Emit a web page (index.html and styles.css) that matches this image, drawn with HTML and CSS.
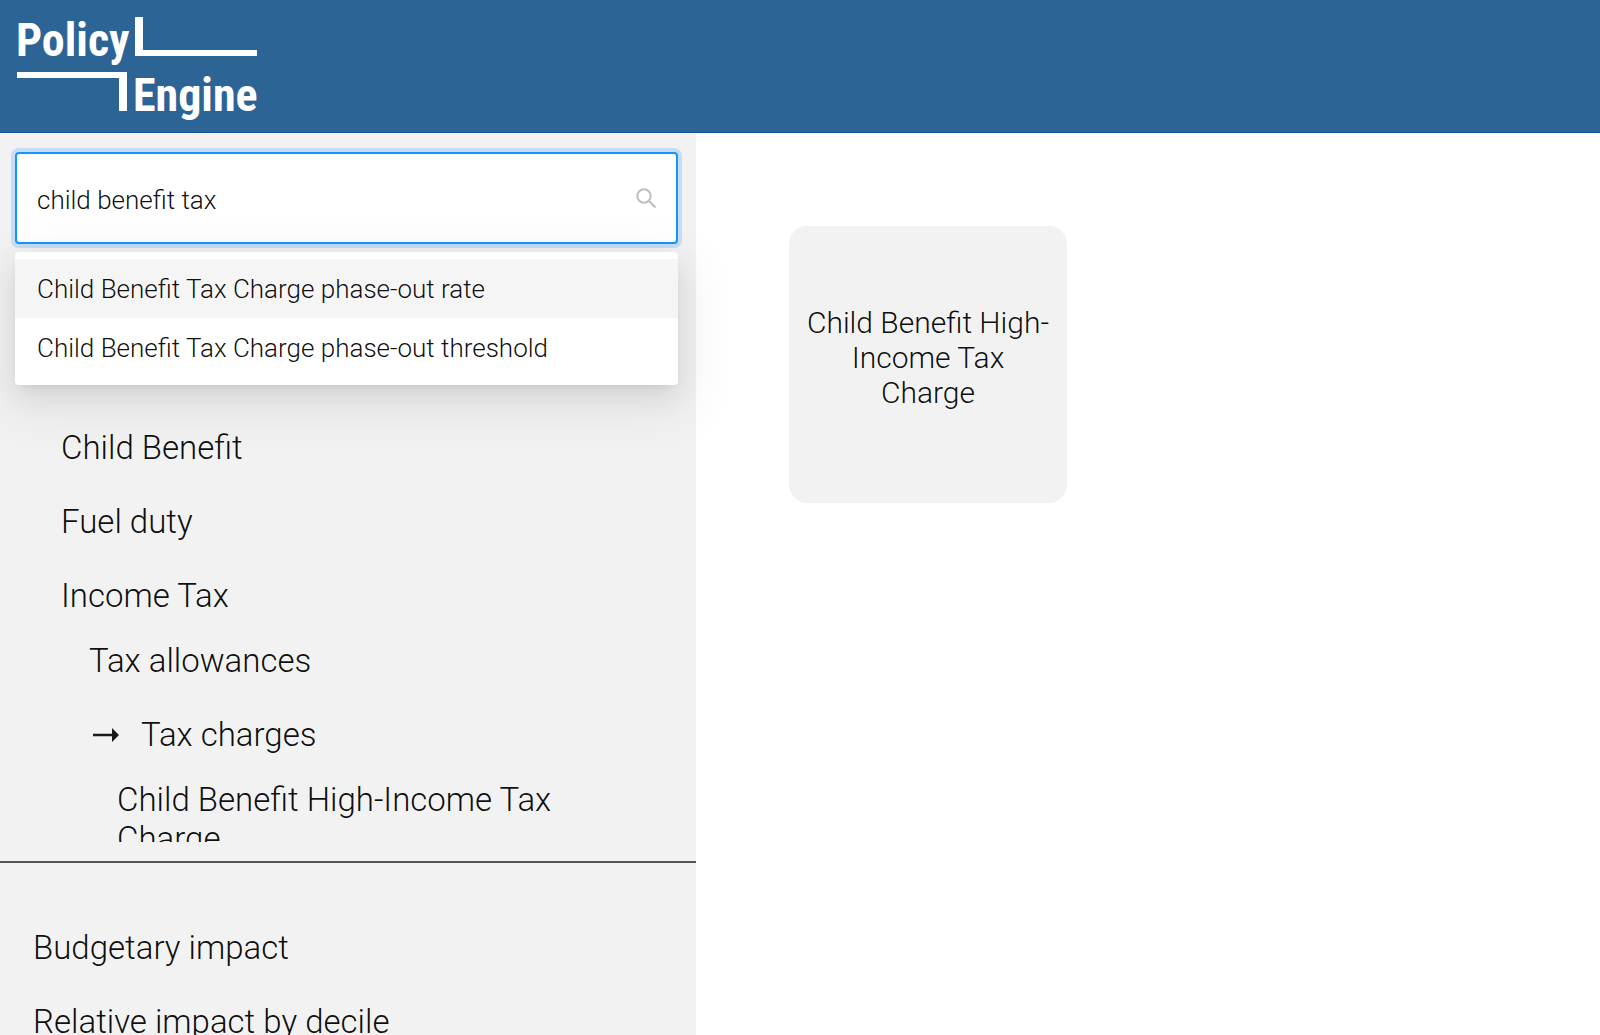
FILE: index.html
```html
<!DOCTYPE html>
<html lang="en">
<head>
<meta charset="utf-8">
<title>PolicyEngine</title>
<link rel="stylesheet" href="styles.css">
</head>
<body>
<header class="header">
  <a class="logo" href="#" aria-label="PolicyEngine">
    <svg width="240" height="112" viewBox="0 0 240 112" fill="#fff">
      <text class="logo-text" x="-1" y="44">Policy</text>
      <path d="M118 5h8v33h114v6H118zM0 60h110v39h-8V66H0z"/>
      <text class="logo-text" x="116" y="99">Engine</text>
    </svg>
  </a>
</header>
<div class="layout">
  <aside class="sidebar">
    <div class="search">
      <input class="search-input" type="text" aria-label="Search parameters" value="child benefit tax">
      <svg class="search-icon" width="22" height="22" viewBox="0 0 22 22" fill="none" stroke="#bfbfbf" stroke-width="2"><circle cx="9" cy="9" r="6.7"/><path d="M13.7 13.7l6.8 6.8"/></svg>
      <ul class="options">
        <li><button class="option option-active" type="button">Child Benefit Tax Charge phase-out rate</button></li>
        <li><button class="option" type="button">Child Benefit Tax Charge phase-out threshold</button></li>
      </ul>
    </div>
    <nav class="menu policy-menu">
      <ul class="menu-list">
        <li><a href="#">Business rates</a></li>
        <li><a href="#">Child Benefit</a></li>
        <li><a href="#">Fuel duty</a></li>
        <li><a href="#">Income Tax</a>
          <ul class="menu-list submenu">
            <li><a href="#">Tax allowances</a></li>
            <li><a class="current" href="#"><svg width="30" height="16" viewBox="0 0 30 16" fill="#1a1a1a"><path d="M4 6.8h19V1l7 7-7 7V9.2H4z"/></svg>Tax charges</a>
              <ul class="menu-list submenu">
                <li><a href="#">Child Benefit High-Income Tax Charge</a></li>
              </ul>
            </li>
          </ul>
        </li>
      </ul>
    </nav>
    <nav class="menu impact-menu">
      <ul class="menu-list">
        <li><a href="#">Budgetary impact</a></li>
        <li><a href="#">Relative impact by decile</a></li>
      </ul>
    </nav>
  </aside>
  <main class="main">
    <button class="card" type="button">Child Benefit High-Income Tax Charge</button>
  </main>
</div>
</body>
</html>
```
FILE: styles.css
```css
* {
  box-sizing: border-box;
}

body {
  margin: 0;
  height: 100vh;
  display: flex;
  flex-direction: column;
  overflow: hidden;
  background: #fff;
  color: rgba(0, 0, 0, 0.95);
  font-family: Roboto, "Liberation Sans", sans-serif;
  font-weight: 300;
}

ul {
  list-style: none;
  margin: 0;
  padding: 0;
}

a {
  color: inherit;
  text-decoration: none;
}

button,
input {
  font: inherit;
  color: inherit;
}

.header {
  flex: none;
  padding: 12px 17px 8px;
  background: #2c6496;
  border-bottom: 1px solid #0f5490;
}

.logo,
.logo svg {
  display: block;
  overflow: visible;
}

.logo {
  width: 240px;
}

.logo-text {
  font-family: "Roboto Condensed", "Liberation Sans Narrow", sans-serif;
  font-size: 46px;
  font-weight: 700;
}

.layout {
  flex: 1;
  min-height: 0;
  display: flex;
}

.sidebar {
  flex: none;
  width: 43.5%;
  display: flex;
  flex-direction: column;
  background: #f2f2f2;
}

.search {
  position: relative;
  z-index: 1;
  flex: none;
  margin: 19px 18px 0 15px;
}

.search-input {
  display: block;
  width: 100%;
  height: 92px;
  padding: 4px 60px 0 20px;
  border: 2px solid #1296ff;
  border-radius: 4px;
  outline: none;
  box-shadow: 0 0 0 4px #c8dcf5;
  background: #fff;
  font-size: 26px;
}

.search-icon {
  position: absolute;
  top: 35px;
  right: 21px;
}

.options {
  position: absolute;
  top: 100px;
  left: 0;
  right: 0;
  padding: 7px 0 8px;
  border-radius: 4px;
  background: #fff;
  box-shadow: 0 6px 11px -7px rgba(0, 0, 0, 0.12),
    0 11px 30px rgba(0, 0, 0, 0.08),
    0 17px 52px 15px rgba(0, 0, 0, 0.05);
}

.option {
  display: block;
  width: 100%;
  height: 59px;
  padding: 2px 22px 0;
  border: 0;
  background: none;
  font-size: 26px;
  line-height: 57px;
  text-align: left;
}

.option-active {
  background: #f5f5f5;
}

.menu {
  overflow: hidden;
  font-size: 33px;
  line-height: 39px;
}

.menu a {
  display: block;
}

.menu-list {
  display: flex;
  flex-direction: column;
  gap: 35px;
}

.submenu {
  padding: 26px 0 0 28px;
}

.policy-menu {
  flex: none;
  height: 598px;
  padding: 110px 120px 0 61px;
}

.menu .current {
  display: flex;
  align-items: center;
  gap: 22px;
}

.impact-menu {
  flex: 1;
  margin-top: 19px;
  padding: 65px 33px 0;
  border-top: 2px solid #555;
}

.main {
  flex: 1;
  padding: 93px;
}

.card {
  width: 278px;
  height: 277px;
  padding: 0 15px 14px;
  border: 0;
  border-radius: 18px;
  background: #f2f2f2;
  font-size: 30px;
  line-height: 35px;
  text-align: center;
}
```
